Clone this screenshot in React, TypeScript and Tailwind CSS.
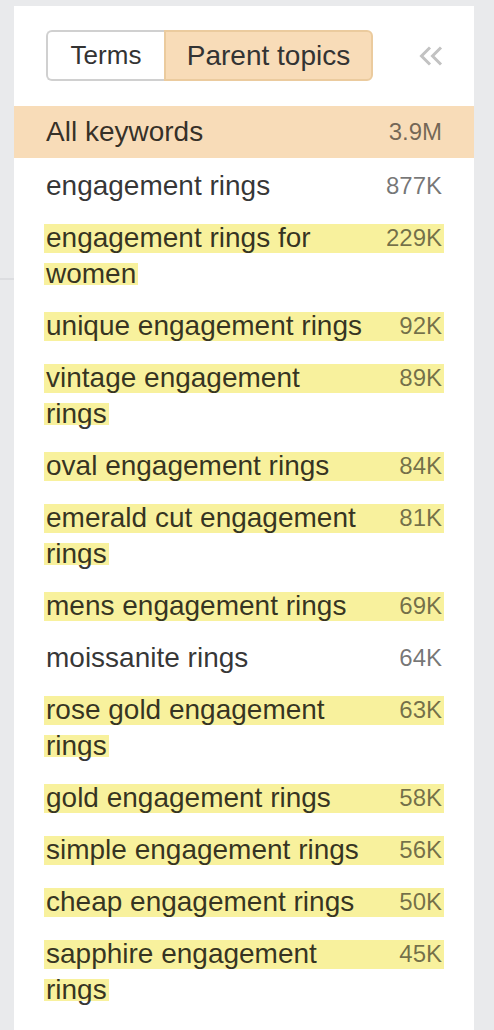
const rows: { lines: string[]; count: string; hl: boolean }[] = [
  { lines: ["engagement rings"], count: "877K", hl: false },
  { lines: ["engagement rings for", "women"], count: "229K", hl: true },
  { lines: ["unique engagement rings"], count: "92K", hl: true },
  { lines: ["vintage engagement", "rings"], count: "89K", hl: true },
  { lines: ["oval engagement rings"], count: "84K", hl: true },
  { lines: ["emerald cut engagement", "rings"], count: "81K", hl: true },
  { lines: ["mens engagement rings"], count: "69K", hl: true },
  { lines: ["moissanite rings"], count: "64K", hl: false },
  { lines: ["rose gold engagement", "rings"], count: "63K", hl: true },
  { lines: ["gold engagement rings"], count: "58K", hl: true },
  { lines: ["simple engagement rings"], count: "56K", hl: true },
  { lines: ["cheap engagement rings"], count: "50K", hl: true },
  { lines: ["sapphire engagement", "rings"], count: "45K", hl: true },
];

const font = { fontFamily: '"Liberation Sans", Arial, sans-serif' };

function Row({ lines, count, hl }: { lines: string[]; count: string; hl: boolean }) {
  const [first, ...rest] = lines;
  return (
    <div className="px-[30px] pt-[10px] pb-[6px]">
      <div className="flex h-[36px] items-center">
        <div
          className={`flex h-[29px] flex-1 items-center justify-between px-[2px] ${hl ? "bg-[#f8f19d]" : ""}`}
        >
          <span className="whitespace-nowrap text-[28px] text-black/80">{first}</span>
          <span className="text-[24px] text-black/55">{count}</span>
        </div>
      </div>
      {rest.map((line) => (
        <div key={line} className="flex h-[36px] items-center">
          <span
            className={`flex h-[22px] items-center whitespace-nowrap px-[2px] text-[28px] text-black/80 ${hl ? "bg-[#f8f19d]" : ""}`}
          >
            {line}
          </span>
        </div>
      ))}
    </div>
  );
}

export default function App() {
  return (
    <div className="flex min-h-[1030px] w-[494px] bg-[#e9eaec]" style={font}>
      {/* left strip */}
      <div className="w-[14px] shrink-0">
        <div className="h-[280px] border-b-2 border-[#dcdde0]" />
      </div>

      {/* panel */}
      <div className="mt-[6px] w-[460px] bg-white">
        <div className="flex h-[100px] items-start pl-[32px] pt-[24px]">
          <div className="flex h-[51px]">
            <button className="flex w-[118px] items-center justify-center rounded-l-[6px] border-2 border-r-0 border-[#d0d0d0] bg-white text-[26px] text-[#333]">
              Terms
            </button>
            <button className="flex w-[209px] items-center justify-center rounded-r-[6px] border-2 border-[#ebcb9e] bg-[#f8dcb8] text-[28px] text-[#333]">
              Parent topics
            </button>
          </div>
          <div className="ml-[46px] mt-[16px]">
            <svg width="24" height="20" viewBox="0 0 24 20" fill="none" stroke="#c2c2c2" strokeWidth="3">
              <path d="M11 1.5 L2.5 10 L11 18.5" />
              <path d="M22 1.5 L13.5 10 L22 18.5" />
            </svg>
          </div>
        </div>

        {/* All keywords */}
        <div className="bg-[#f8dcb8] px-[30px] pt-[8px] pb-[8px]">
          <div className="flex h-[36px] items-center justify-between px-[2px]">
            <span className="text-[28px] text-black/80">All keywords</span>
            <span className="text-[24px] text-black/55">3.9M</span>
          </div>
        </div>

        {rows.map((r) => (
          <Row key={r.lines.join(" ")} {...r} />
        ))}
      </div>

      {/* right strip */}
      <div className="w-[20px] shrink-0" />
    </div>
  );
}
